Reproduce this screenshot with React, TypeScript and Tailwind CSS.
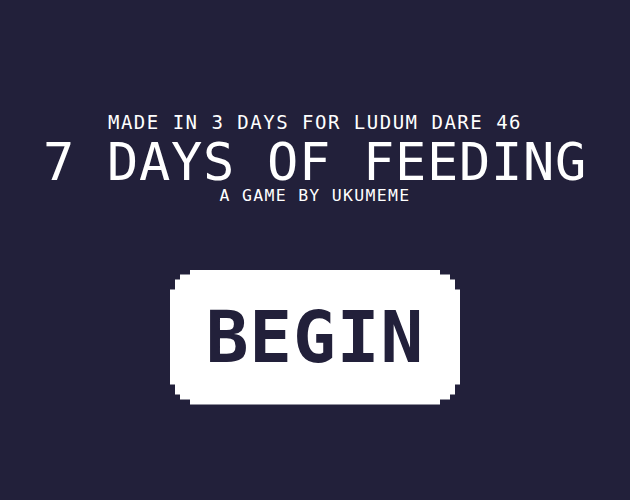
import React from "react";

// Stepped "pixel" corners for the start button
const pixelCorners =
  "[clip-path:polygon(20px_0,calc(100%-20px)_0,calc(100%-20px)_5px,calc(100%-10px)_5px,calc(100%-10px)_10px,calc(100%-5px)_10px,calc(100%-5px)_20px,100%_20px,100%_calc(100%-20px),calc(100%-5px)_calc(100%-20px),calc(100%-5px)_calc(100%-10px),calc(100%-10px)_calc(100%-10px),calc(100%-10px)_calc(100%-5px),calc(100%-20px)_calc(100%-5px),calc(100%-20px)_100%,20px_100%,20px_calc(100%-5px),10px_calc(100%-5px),10px_calc(100%-10px),5px_calc(100%-10px),5px_calc(100%-20px),0_calc(100%-20px),0_20px,5px_20px,5px_10px,10px_10px,10px_5px,20px_5px)]";

const TitleScreen = () => {
  return (
    <div className="min-h-screen h-[500px] w-full bg-[#22203a] text-white font-['DejaVu_Sans_Mono',monospace] flex flex-col items-center pt-[113px] overflow-hidden">
      {/* Header */}
      <p className="text-[19px] leading-none tracking-[1.5px] whitespace-nowrap">
        MADE IN 3 DAYS FOR LUDUM DARE 46
      </p>
      <h1 className="mt-[7px] text-[52px] leading-[46px] tracking-[0.7px] whitespace-nowrap">
        7 DAYS OF FEEDING
      </h1>
      <p className="mt-[3px] text-[16.5px] leading-none tracking-[1.3px] whitespace-nowrap">
        A GAME BY UKUMEME
      </p>

      {/* Start button */}
      <button
        className={`mt-[65px] w-[290px] h-[135px] bg-white text-[#22203a] flex items-center justify-center ${pixelCorners}`}
      >
        <span className="text-[71px] font-bold leading-none tracking-[1px]">BEGIN</span>
      </button>
    </div>
  );
};

const App = () => {
  return <TitleScreen />;
};

export default App;
